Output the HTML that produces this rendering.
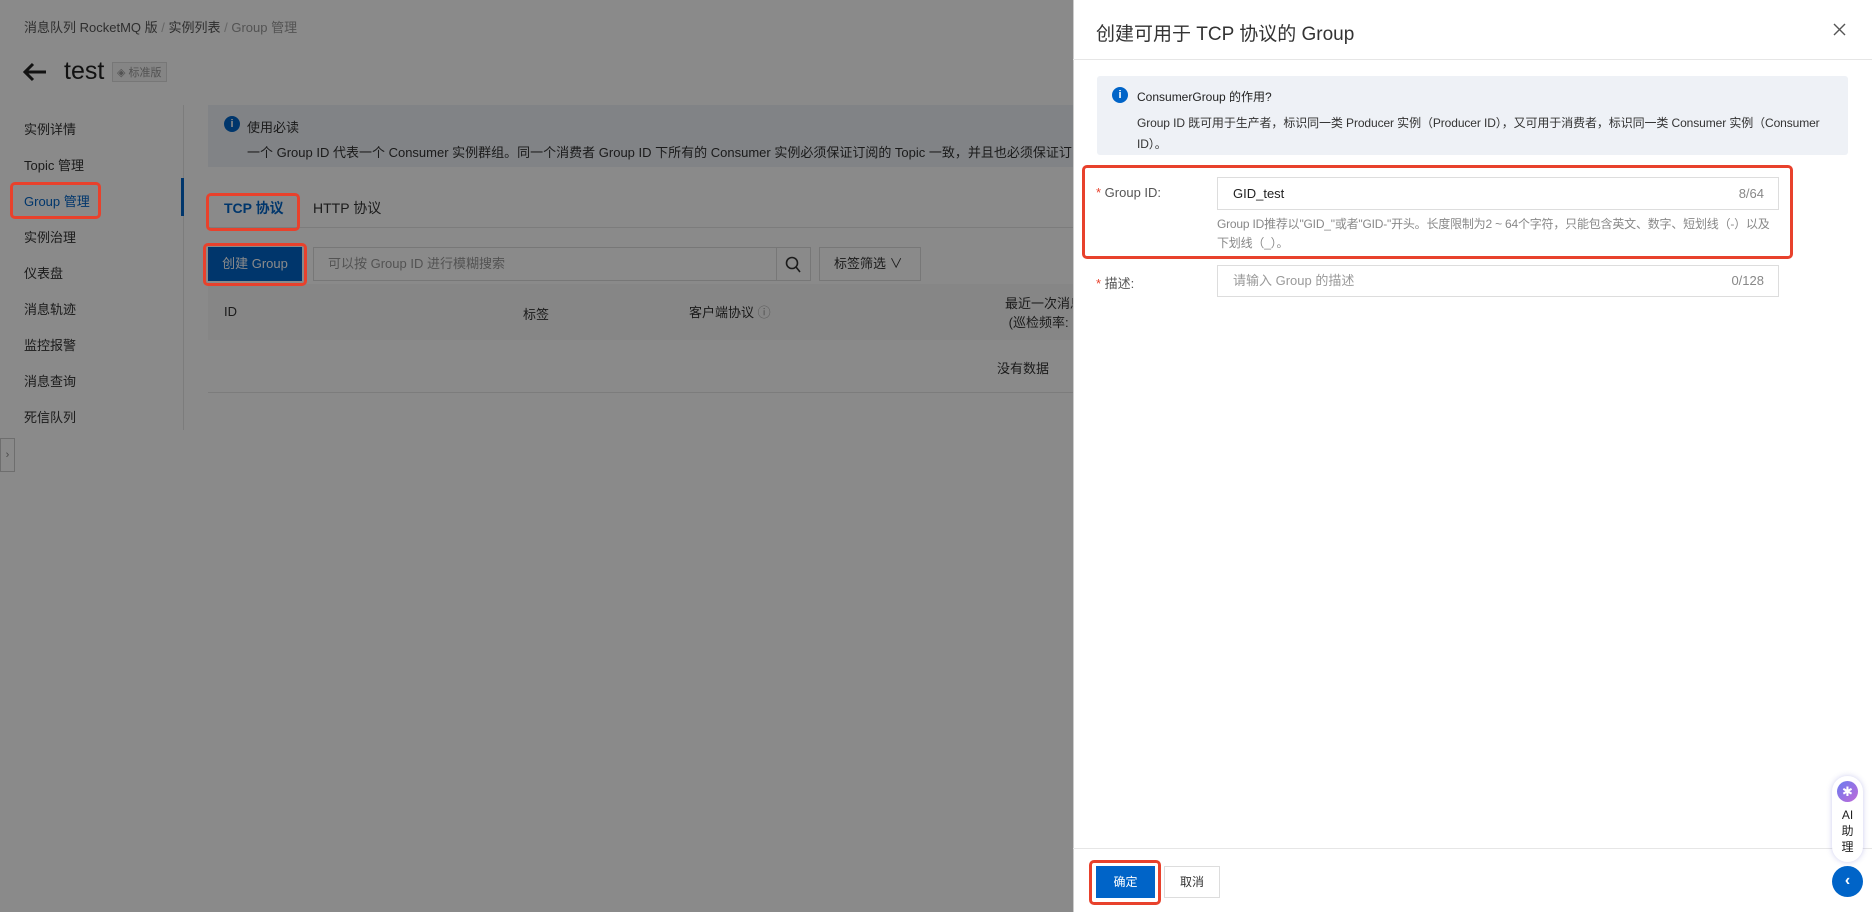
<!DOCTYPE html>
<html><head><meta charset="utf-8"><style>
*{box-sizing:border-box;margin:0;padding:0}
body{width:1872px;height:912px;overflow:hidden;position:relative;background:#fff;font-family:"Liberation Sans","Noto Sans CJK SC",sans-serif;color:#333;font-size:14px}
.a{position:absolute;white-space:nowrap}
.ov{position:absolute;left:0;top:0;width:1873px;height:912px;background:rgba(0,0,0,0.46)}
.side{font-size:13px;color:#333}
.red{position:absolute;border:3px solid #e8412c;border-radius:5px}
</style></head><body>
<div class="a" style="left:24px;top:17px;font-size:13px;color:#555">消息队列 RocketMQ 版 <span style="color:#bbb">/</span> 实例列表 <span style="color:#bbb">/</span> <span style="color:#999">Group 管理</span></div>
<svg class="a" style="left:22px;top:62px" width="26" height="20" viewBox="0 0 26 20"><path d="M24 10H3M11 2L3 10l8 8" stroke="#222" stroke-width="3" fill="none"/></svg>
<div class="a" style="left:64px;top:57px;font-size:25px;color:#222">test</div>
<div class="a" style="left:112px;top:62px;font-size:11px;color:#999;border:1px solid #ddd;padding:1px 4px;background:#f5f5f5">◈ 标准版</div>
<div class="a side" style="left:24px;top:119px">实例详情</div>
<div class="a side" style="left:24px;top:155px">Topic 管理</div>
<div class="a side" style="left:24px;top:191px;color:#0064c8">Group 管理</div>
<div class="a side" style="left:24px;top:227px">实例治理</div>
<div class="a side" style="left:24px;top:263px">仪表盘</div>
<div class="a side" style="left:24px;top:299px">消息轨迹</div>
<div class="a side" style="left:24px;top:335px">监控报警</div>
<div class="a side" style="left:24px;top:371px">消息查询</div>
<div class="a side" style="left:24px;top:407px">死信队列</div>
<div class="a" style="left:183px;top:105px;width:1px;height:325px;background:#e5e5e5"></div>
<div class="a" style="left:181px;top:178px;width:3px;height:38px;background:#0064c8"></div>
<div class="a" style="left:0;top:438px;width:15px;height:34px;border:1px solid #ccc;background:#fff;font-size:11px;color:#888;text-align:center;line-height:32px">›</div>
<div class="a" style="left:208px;top:105px;width:900px;height:62px;background:#eef2f8"></div>
<div class="a" style="left:224px;top:116px;width:16px;height:16px;border-radius:50%;background:#0064c8;color:#fff;font-size:11px;text-align:center;line-height:16px;font-weight:bold">i</div>
<div class="a" style="left:247px;top:117px;font-size:13px">使用必读</div>
<div class="a" style="left:247px;top:142px;font-size:13px">一个 Group ID 代表一个 Consumer 实例群组。同一个消费者 Group ID 下所有的 Consumer 实例必须保证订阅的 Topic 一致，并且也必须保证订阅 Topic 时设</div>
<div class="a" style="left:224px;top:198px;font-size:14px;color:#0064c8;font-weight:bold">TCP 协议</div>
<div class="a" style="left:313px;top:198px;font-size:14px">HTTP 协议</div>
<div class="a" style="left:208px;top:227px;width:900px;height:1px;background:#e5e5e5"></div>
<div class="a" style="left:208px;top:247px;width:94px;height:34px;background:#0064c8;color:#fff;font-size:13px;text-align:center;line-height:34px">创建 Group</div>
<div class="a" style="left:313px;top:247px;width:464px;height:34px;border:1px solid #ddd;font-size:13px;color:#999;padding-left:14px;line-height:32px">可以按 Group ID 进行模糊搜索</div>
<div class="a" style="left:776px;top:247px;width:35px;height:34px;border:1px solid #ddd"></div>
<svg class="a" style="left:785px;top:256px" width="16" height="17" viewBox="0 0 16 17"><circle cx="7" cy="7" r="5.5" stroke="#333" stroke-width="1.6" fill="none"/><path d="M11 11l4 5" stroke="#333" stroke-width="1.6"/></svg>
<div class="a" style="left:819px;top:247px;width:102px;height:34px;border:1px solid #ddd;font-size:13px;padding-left:14px;line-height:32px">标签筛选 ∨</div>
<div class="a" style="left:208px;top:284px;width:900px;height:56px;background:#f7f7f7"></div>
<div class="a" style="left:224px;top:304px;font-size:13px">ID</div>
<div class="a" style="left:523px;top:304px;font-size:13px">标签</div>
<div class="a" style="left:689px;top:302px;font-size:13px">客户端协议 <span style="color:#999">ⓘ</span></div>
<div class="a" style="left:1005px;top:293px;font-size:13px">最近一次消息<br>&nbsp;(巡检频率:</div>
<div class="a" style="left:997px;top:358px;font-size:13px">没有数据</div>
<div class="a" style="left:208px;top:392px;width:900px;height:1px;background:#e5e5e5"></div>
<div class="ov"></div>
<div class="red" style="left:10px;top:182px;width:91px;height:37px"></div>
<div class="red" style="left:206px;top:193px;width:94px;height:38px"></div>
<div class="red" style="left:203px;top:243px;width:104px;height:43px"></div>
<div class="a" style="left:1073px;top:0;width:799px;height:912px;background:#fff;border-left:1px solid #ccc"></div>
<div class="a" style="left:1096px;top:19px;font-size:19px;color:#333">创建可用于 TCP 协议的 Group</div>
<svg class="a" style="left:1833px;top:23px" width="13" height="13" viewBox="0 0 13 13"><path d="M1 1l11 11M12 1L1 12" stroke="#555" stroke-width="1.4"/></svg>
<div class="a" style="left:1073px;top:59px;width:799px;height:1px;background:#e6e6e6"></div>
<div class="a" style="left:1097px;top:76px;width:751px;height:79px;background:#eef1f6;border-radius:3px"></div>
<div class="a" style="left:1112px;top:87px;width:16px;height:16px;border-radius:50%;background:#0064c8;color:#fff;font-size:11px;text-align:center;line-height:16px;font-weight:bold">i</div>
<div class="a" style="left:1137px;top:88px;font-size:12px;color:#222">ConsumerGroup 的作用?</div>
<div class="a" style="left:1137px;top:113px;font-size:12px;color:#333;line-height:21px;letter-spacing:-0.1px">Group ID 既可用于生产者，标识同一类 Producer 实例（Producer ID），又可用于消费者，标识同一类 Consumer 实例（Consumer<br>ID）。</div>
<div class="red" style="left:1082px;top:165px;width:711px;height:94px"></div>
<div class="a" style="left:1096px;top:185px;font-size:13px;color:#555"><span style="color:#e8412c">*</span> Group ID:</div>
<div class="a" style="left:1217px;top:177px;width:562px;height:33px;border:1px solid #ddd;font-size:13px;color:#222;padding-left:15px;line-height:31px">GID_test<span style="position:absolute;right:14px;color:#888">8/64</span></div>
<div class="a" style="left:1217px;top:215px;font-size:12px;color:#888;line-height:19px;letter-spacing:-0.2px">Group ID推荐以"GID_"或者"GID-"开头。长度限制为2 ~ 64个字符，只能包含英文、数字、短划线（-）以及<br>下划线（_）。</div>
<div class="a" style="left:1096px;top:273px;font-size:13px;color:#555"><span style="color:#e8412c">*</span> 描述:</div>
<div class="a" style="left:1217px;top:265px;width:562px;height:32px;border:1px solid #ddd;font-size:13px;color:#999;padding-left:15px;line-height:30px">请输入 Group 的描述<span style="position:absolute;right:14px;color:#888">0/128</span></div>
<div class="a" style="left:1073px;top:848px;width:799px;height:1px;background:#e6e6e6"></div>
<div class="a" style="left:1096px;top:866px;width:59px;height:32px;background:#0064c8;color:#fff;font-size:12px;text-align:center;line-height:32px">确定</div>
<div class="a" style="left:1164px;top:866px;width:56px;height:32px;border:1px solid #ddd;font-size:12px;text-align:center;line-height:30px">取消</div>
<div class="red" style="left:1089px;top:860px;width:72px;height:45px"></div>
<div class="a" style="left:1832px;top:776px;width:31px;height:86px;border-radius:16px;background:#fff;box-shadow:0 0 6px rgba(90,90,200,.3)"></div>
<div class="a" style="left:1837px;top:781px;width:21px;height:21px;border-radius:50%;background:linear-gradient(135deg,#6a7cf0,#c06ad8);color:#fff;font-size:13px;text-align:center;line-height:21px">✱</div>
<div class="a" style="left:1838px;top:807px;font-size:12px;color:#222;line-height:16px;text-align:center;width:19px;white-space:normal">AI<br>助<br>理</div>
<div class="a" style="left:1832px;top:866px;width:31px;height:31px;border-radius:50%;background:#0064c8;color:#fff;font-size:16px;font-weight:bold;text-align:center;line-height:30px">‹</div>
</body></html>
